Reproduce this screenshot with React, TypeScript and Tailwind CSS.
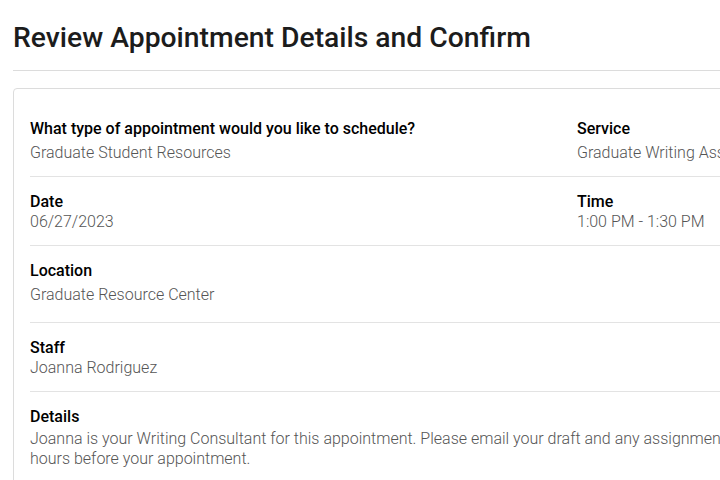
const rows = [
  {
    left: { label: "What type of appointment would you like to schedule?", value: "Graduate Student Resources" },
    right: { label: "Service", value: "Graduate Writing Assistance Appointment" },
  },
  {
    left: { label: "Date", value: "06/27/2023" },
    right: { label: "Time", value: "1:00 PM - 1:30 PM" },
  },
];

function Field({ label, value, gap }: { label: string; value: string; gap?: boolean }) {
  return (
    <div>
      <div className="text-[16px] leading-5 font-medium text-black">{label}</div>
      <div className={`text-[16px] leading-5 font-light text-[#555] ${gap ? "mt-1" : ""}`}>{value}</div>
    </div>
  );
}

export default function App() {
  return (
    <div
      className="w-[720px] h-[480px] overflow-hidden bg-white"
      style={{ fontFamily: "Roboto, 'Liberation Sans', sans-serif" }}
    >
      <div className="w-[1100px] pl-[13px]">
        <h1 className="pt-[22px] text-[28.3px] leading-[32px] font-medium text-[#1c1c1c]">
          Review Appointment Details and Confirm
        </h1>
        <hr className="mt-[16px] border-0 border-t border-[#dcdcdc]" />
        <div className="mt-[17px] rounded-[4px] border border-[#dcdcdc] px-4 pt-[30px]">
          {/* first row */}
          <div className="grid grid-cols-[547px_1fr] pb-[13px] border-b border-[#e3e3e3]">
            <Field label={rows[0].left.label} value={rows[0].left.value} gap />
            <Field label={rows[0].right.label} value={rows[0].right.value} gap />
          </div>
          <div className="grid grid-cols-[547px_1fr] pt-[15px] pb-[13px] border-b border-[#e3e3e3]">
            <Field label={rows[1].left.label} value={rows[1].left.value} />
            <Field label={rows[1].right.label} value={rows[1].right.value} />
          </div>
          <div className="pt-[15px] pb-[17px] border-b border-[#e3e3e3]">
            <Field label="Location" value="Graduate Resource Center" gap />
          </div>
          <div className="pt-[15px] pb-[13px] border-b border-[#e3e3e3]">
            <Field label="Staff" value="Joanna Rodriguez" />
          </div>
          <div className="pt-[15px] pb-[20px]">
            <div className="text-[16px] leading-5 font-medium text-black">Details</div>
            <p className="mt-[2px] w-[830px] text-[16px] leading-5 font-light text-[#555]">
              Joanna is your Writing Consultant for this appointment. Please email your draft and any assignment guidelines 24
              hours before your appointment.
            </p>
          </div>
        </div>
      </div>
    </div>
  );
}
